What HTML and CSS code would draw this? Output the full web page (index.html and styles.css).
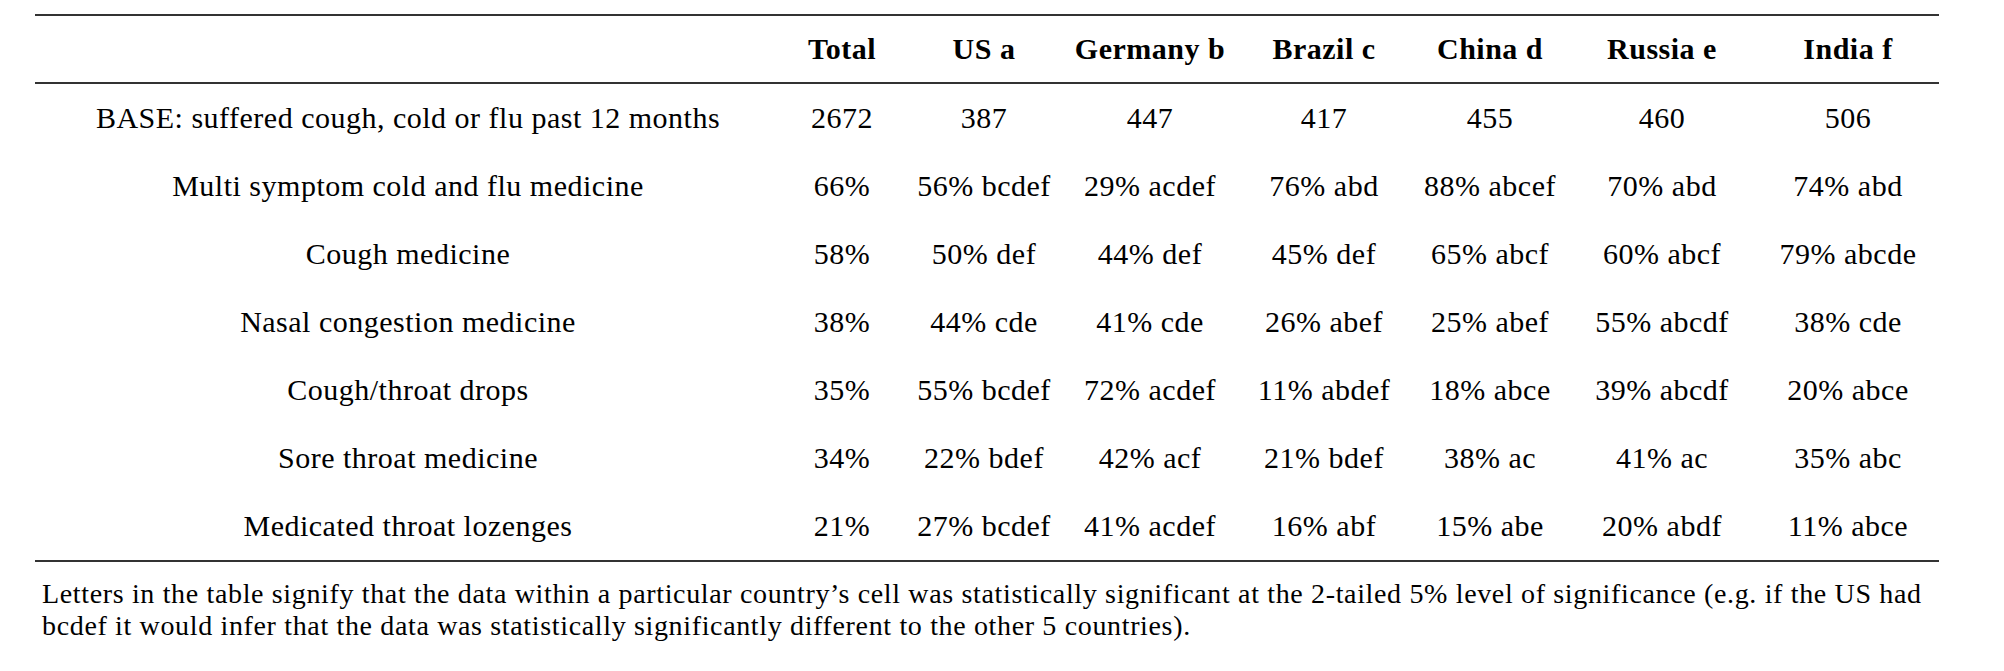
FILE: index.html
```html
<!DOCTYPE html>
<html lang="en">
<head>
<meta charset="utf-8">
<title>Cold and flu medicine usage by country</title>
<link rel="stylesheet" href="styles.css">
</head>
<body>
<div class="page">
  <table class="data">
    <colgroup>
      <col class="c-label">
      <col class="c-total">
      <col class="c-us">
      <col class="c-de">
      <col class="c-br">
      <col class="c-cn">
      <col class="c-ru">
      <col class="c-in">
    </colgroup>
    <thead>
      <tr>
        <th></th>
        <th>Total</th>
        <th>US a</th>
        <th>Germany b</th>
        <th>Brazil c</th>
        <th>China d</th>
        <th>Russia e</th>
        <th>India f</th>
      </tr>
    </thead>
    <tbody>
      <tr>
        <td>BASE: suffered cough, cold or flu past 12 months</td>
        <td>2672</td><td>387</td><td>447</td><td>417</td><td>455</td><td>460</td><td>506</td>
      </tr>
      <tr>
        <td>Multi symptom cold and flu medicine</td>
        <td>66%</td><td>56% bcdef</td><td>29% acdef</td><td>76% abd</td><td>88% abcef</td><td>70% abd</td><td>74% abd</td>
      </tr>
      <tr>
        <td>Cough medicine</td>
        <td>58%</td><td>50% def</td><td>44% def</td><td>45% def</td><td>65% abcf</td><td>60% abcf</td><td>79% abcde</td>
      </tr>
      <tr>
        <td>Nasal congestion medicine</td>
        <td>38%</td><td>44% cde</td><td>41% cde</td><td>26% abef</td><td>25% abef</td><td>55% abcdf</td><td>38% cde</td>
      </tr>
      <tr>
        <td>Cough/throat drops</td>
        <td>35%</td><td>55% bcdef</td><td>72% acdef</td><td>11% abdef</td><td>18% abce</td><td>39% abcdf</td><td>20% abce</td>
      </tr>
      <tr>
        <td>Sore throat medicine</td>
        <td>34%</td><td>22% bdef</td><td>42% acf</td><td>21% bdef</td><td>38% ac</td><td>41% ac</td><td>35% abc</td>
      </tr>
      <tr>
        <td>Medicated throat lozenges</td>
        <td>21%</td><td>27% bcdef</td><td>41% acdef</td><td>16% abf</td><td>15% abe</td><td>20% abdf</td><td>11% abce</td>
      </tr>
    </tbody>
  </table>
  <p class="note">Letters in the table signify that the data within a particular country’s cell was statistically significant at the 2-tailed 5% level of significance (e.g. if the US had bcdef it would infer that the data was statistically significantly different to the other 5 countries).</p>
</div>
</body>
</html>
```
FILE: styles.css
```css
html, body {
  margin: 0;
  padding: 0;
  background: #ffffff;
}

body {
  font-family: "Liberation Serif", "Times New Roman", serif;
  color: #000000;
}

.page {
  padding: 14px 0 0 35px;
}

.data {
  width: 1904px;
  border-collapse: collapse;
  table-layout: fixed;
  font-size: 30px;
  letter-spacing: 0.5px;
  border-top: 2px solid #333333;
  border-bottom: 2px solid #333333;
}

.c-label { width: 746px; }
.c-total { width: 122px; }
.c-us { width: 162px; }
.c-de { width: 170px; }
.c-br { width: 178px; }
.c-cn { width: 154px; }
.c-ru { width: 190px; }
.c-in { width: 182px; }

.data th,
.data td {
  padding: 0;
  text-align: center;
  vertical-align: middle;
  white-space: nowrap;
}

.data thead th {
  height: 66px;
  font-weight: bold;
  border-bottom: 2px solid #333333;
}

.data tbody td {
  height: 68px;
  font-weight: normal;
}

.note {
  width: 1930px;
  margin: 0;
  padding: 16px 0 0 7px;
  font-size: 28px;
  letter-spacing: 0.65px;
  line-height: 32px;
}
```
